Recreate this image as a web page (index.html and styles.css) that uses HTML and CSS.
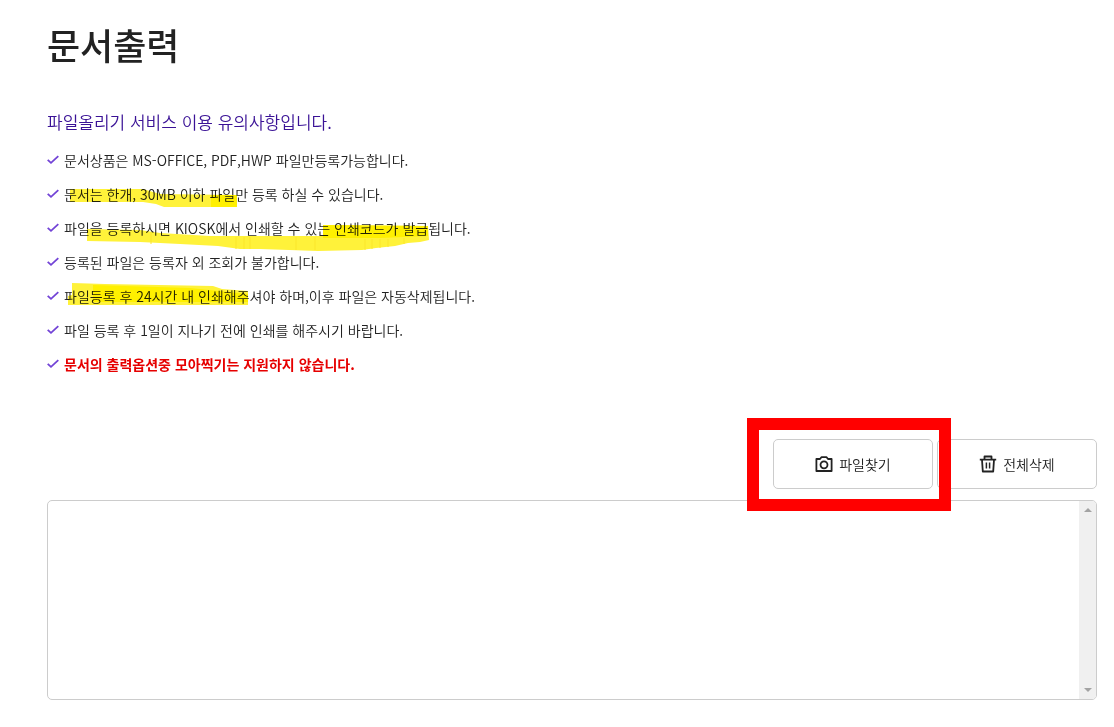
FILE: index.html
```html
<!DOCTYPE html>
<html lang="ko">
<head>
    <meta charset="UTF-8">
    <meta name="viewport" content="width=device-width, initial-scale=1.0">
    <title>문서출력</title>
    <link rel="stylesheet" href="styles.css">
</head>
<body>
    <svg class="defs" aria-hidden="true">
        <symbol id="check" viewBox="0 0 12 10">
            <path d="M.7 4.8L4 7.8L11.3 1.2" fill="none" stroke="#7243d6" stroke-width="1.8"/>
        </symbol>
    </svg>

    <main class="page">
        <h1 class="page-title">문서출력</h1>

        <section class="notice">
            <h2 class="notice-title">파일올리기 서비스 이용 유의사항입니다.</h2>
            <div class="notice-body">
                <ul class="notice-list">
                    <li><svg class="check"><use href="#check"/></svg>문서상품은 MS-OFFICE, PDF,HWP 파일만등록가능합니다.</li>
                    <li><svg class="check"><use href="#check"/></svg>문서는 한개, 30MB 이하 파일만 등록 하실 수 있습니다.</li>
                    <li><svg class="check"><use href="#check"/></svg>파일을 등록하시면 KIOSK에서 인쇄할 수 있는 인쇄코드가 발급됩니다.</li>
                    <li><svg class="check"><use href="#check"/></svg>등록된 파일은 등록자 외 조회가 불가합니다.</li>
                    <li><svg class="check"><use href="#check"/></svg>파일등록 후 24시간 내 인쇄해주셔야 하며,이후 파일은 자동삭제됩니다.</li>
                    <li><svg class="check"><use href="#check"/></svg>파일 등록 후 1일이 지나기 전에 인쇄를 해주시기 바랍니다.</li>
                    <li class="warning"><svg class="check"><use href="#check"/></svg>문서의 출력옵션중 모아찍기는 지원하지 않습니다.</li>
                </ul>
                <!-- marker strokes -->
                <svg class="marker" width="400" height="170" viewBox="47 148 400 170" aria-hidden="true">
                    <g fill="#fff23a">
                        <path d="M70 189H143L160 194L237 195V207H164L156 204L143 202H70Z"/>
                        <path d="M87 229L140 230L160 233L210 236H323V225L428 226L429 240L420 242L408 243L395 246L376 248L362 250L318 251L260 249H240L218 246L180 244L140 242L87 241Z"/>
                        <path d="M72 283L105 284L213 286L222 289L248 291V305H68V296L72 295Z"/>
                    </g>
                    <g fill="#fff000">
                        <path d="M211 195H237V207H211Z"/>
                        <path d="M323 225L428 226V236L380 238H323Z"/>
                        <path d="M93 285L190 288L248 294V302H93Z"/>
                    </g>
                    <path d="M151 232v12M236 237v12M244 237v12M250 237v12M296 237v13M315 237v13M365 239v11M372 239v10M380 239v9M388 239v8M404 238v6" stroke="#fbe62a" fill="none"/>
                </svg>
            </div>
        </section>

        <div class="toolbar">
            <div class="pick">
                <button type="button" class="btn">
                    <svg class="icon" viewBox="0 0 18 18" fill="none" stroke="#222" stroke-width="1.8">
                        <path d="M1.4 4H5L6.4 2.2H11.6L13 4H16.6V16H1.4Z" stroke-linejoin="round"/>
                        <circle cx="9" cy="9.8" r="3.5"/>
                    </svg>
                    파일찾기
                </button>
                <span class="callout" aria-hidden="true"></span>
            </div>
            <button type="button" class="btn">
                <svg class="icon" viewBox="0 0 18 18" fill="none" stroke="#222" stroke-width="1.8">
                    <path d="M.8 4.6H17.2M5.5 4.4V1.5H12.5V4.4M3 4.8L3.8 16.5H14.2L15 4.8" stroke-linejoin="round"/>
                    <path d="M7.4 7.5V13.5M10.6 7.5V13.5" stroke-width="1.5"/>
                </svg>
                전체삭제
            </button>
        </div>

        <div class="file-list">
            <div class="files"></div>
            <div class="scrollbar" aria-hidden="true">
                <svg width="8" height="4" viewBox="0 0 8 4"><path d="M4 0L8 4H0Z" fill="#a3a3a3"/></svg>
                <svg width="8" height="4" viewBox="0 0 8 4"><path d="M0 0H8L4 4Z" fill="#a3a3a3"/></svg>
            </div>
        </div>
    </main>
</body>
</html>
```
FILE: styles.css
```css
* {
    margin: 0;
    padding: 0;
    box-sizing: border-box;
}

body {
    background-color: #fff;
    color: #222;
    font-family: "Noto Sans CJK KR", sans-serif;
    font-size: 14px;
    font-weight: 350;
}

.defs {
    position: absolute;
    width: 0;
    height: 0;
}

.page {
    padding: 18px 17px 27px 47px;
}

.page-title {
    font-size: 36px;
    font-weight: 500;
    line-height: 52px;
    margin-bottom: 38px;
}

.notice {
    margin-bottom: 63px;
}

.notice-title {
    color: #3a1296;
    font-size: 17px;
    font-weight: 350;
    line-height: 28px;
    margin-bottom: 12px;
}

.notice-body {
    position: relative;
}

.notice-list {
    display: flex;
    flex-direction: column;
    gap: 10px;
    list-style: none;
}

.notice-list li {
    display: flex;
    align-items: center;
    gap: 5px;
    line-height: 24px;
}

.notice-list .warning {
    color: #e60000;
    font-weight: 700;
}

.check {
    flex: none;
    width: 12px;
    height: 10px;
}

.marker {
    position: absolute;
    top: 0;
    left: 0;
    mix-blend-mode: multiply;
    pointer-events: none;
}

.toolbar {
    display: flex;
    justify-content: flex-end;
    gap: 4px;
    margin-bottom: 11px;
}

.btn {
    display: flex;
    align-items: center;
    justify-content: center;
    gap: 6px;
    width: 160px;
    height: 50px;
    background: #fff;
    border: 1px solid #ccc;
    border-radius: 5px;
    color: #222;
    font: inherit;
    cursor: pointer;
}

.icon {
    width: 18px;
    height: 18px;
}

.pick {
    position: relative;
}

.callout {
    position: absolute;
    inset: -21px -18px -22px -26px;
    z-index: 1;
    border: 12px solid #f00;
    pointer-events: none;
}

.file-list {
    display: flex;
    min-height: 200px;
    border: 1px solid #ccc;
    border-radius: 5px;
    overflow: hidden;
}

.files {
    flex: 1;
}

.scrollbar {
    display: flex;
    flex-direction: column;
    align-items: center;
    justify-content: space-between;
    width: 17px;
    padding: 7px 0;
    background: #f0f0f0;
}
```
